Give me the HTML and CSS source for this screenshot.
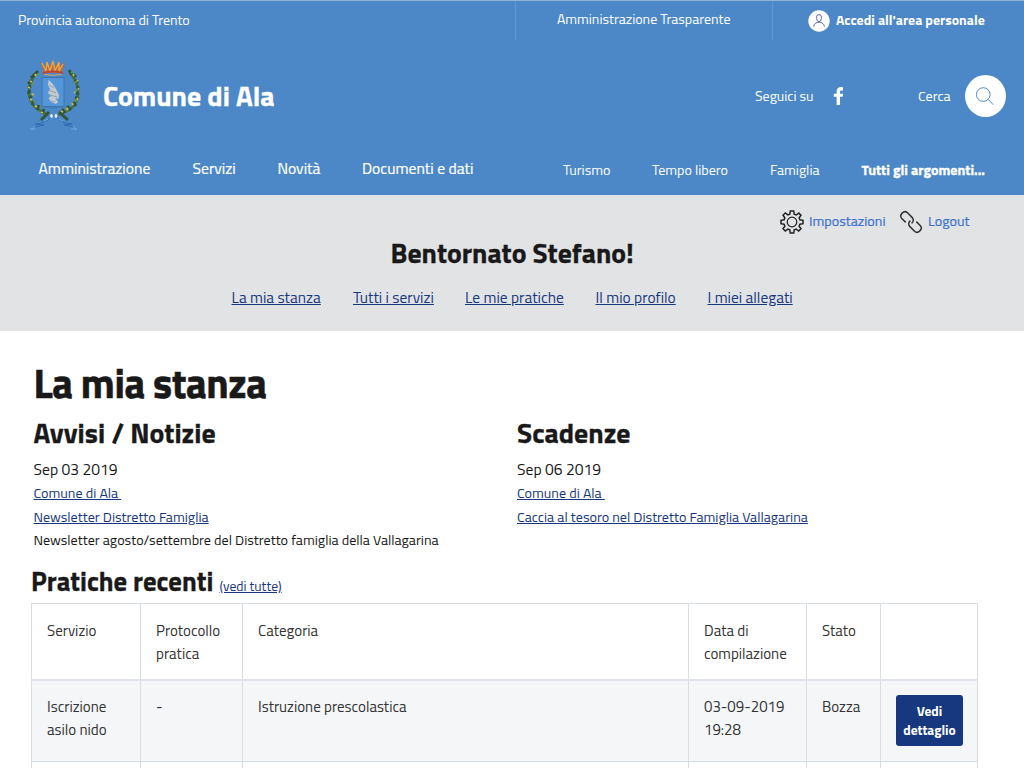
FILE: index.html
```html
<!DOCTYPE html>
<html lang="it">
<head>
<meta charset="utf-8">
<title>Comune di Ala</title>
<link rel="stylesheet" href="styles.css">
</head>
<body>
<header class="header">
  <div class="topbar">
    <a class="region"><span>Provincia autonoma di Trento</span></a>
    <a class="transparency"><span>Amministrazione Trasparente</span></a>
    <a class="login">
      <svg class="avatar" viewBox="0 0 22 22"><circle cx="11" cy="11" r="10.7" fill="#fff"/><path d="M8.700 6.500Q8.700 4.700 11 4.700T13.300 6.500V8.500Q13.100 11.700 11 11.700T8.700 8.500ZM5.600 16.600C5.900 13.500 8.500 12.200 11 12.200S16.100 13.500 16.400 16.600" fill="none" stroke="#4a5698" stroke-width=".9"/></svg>
      <span>Accedi all'area personale</span>
    </a>
  </div>
  <div class="brand-row">
    <svg class="crest" viewBox="0 0 54 72">
      <path d="M10 13C-1 24-1 42 12 50L21 55M43 13C54 25 54 42 42 50L31 55" fill="none" stroke="#467143" stroke-width="2.600"/>
      <path d="M11 11l-4 4M7 15l-3 3M5 20l-4 4M4 26l-3 2M3 30l-2 4M5 36l-3 2M7 41l-2 4M12 45l-2 5M17 49l-2 5M22 52l-8 8M42 10l3 5M46 14l3 3M48 20l3 3M50 26l2 3M50 32l1 3M48 37l4 2M46 42l3 4M40 46l4 4M35 49l3 4M32 52l9 8" stroke="#33563a" stroke-width="3" fill="none"/>
      <path d="M12 13l-3 3M7 22l-2 3M3 34l4 1M8 43l-2-3M15 48l-2-2M44 13l2-2M47 23l4-2M48 31l4-2M47 41l4-1M39 51l1-4" stroke="#66935a" stroke-width="1.500"/>
      <path d="M8 14l1 2M3 21l2 1M1 27l2 1M5 34l2 1M3 39l2 1M8 46l2 1M14 52l2 1M46 14l1 2M50 20l1 1M51 28l1 1M47 32l1 1M50 38l1 2M45 43l1 2M40 48l1 2M34 51l2 1" stroke="#c7bd59" stroke-width="1.700"/>
      <rect x="15" y="17.500" width="22" height="29" fill="#5496da" stroke="#3d74ad"/>
      <path d="M16 47Q25 47 26 49Q27 47 36 47" fill="none" stroke="#4279b8"/>
      <path d="M21.500 20L25 23L29 29L32 35L31.500 39L28.500 38L31 42L29 44L24 42L21.500 38L24 36L21 33L23 29L21 25Z" fill="#c5c9ce"/>
      <path d="M22 25l5 3M22 30l7 3M23 35l7 2M24 41l4 1" stroke="#8794a1" stroke-width=".8"/>
      <path d="M17 13L13.500 2L19 6L19.500 1L23 6L26 0L28 6L33 1L33 6L38 2L35 13Z" fill="#bd6b3d"/>
      <path d="M15 3L19 11L20 2L23 11L26 1L28 11L32 2L32 11L36 4" fill="none" stroke="#e0aa50" stroke-width="1.300"/>
      <path d="M16 13Q26 10 36 13" fill="none" stroke="#bd4338" stroke-width="2.200"/><path d="M17 14.500Q26 16 35 14.500" fill="none" stroke="#d6a95a"/>
      <path d="M25 56Q18 64 8 64L17 65L7 67M29 56Q35 64 45 64L37 65L47 67" fill="none" stroke="#2d69b2" stroke-width=".9"/>
      <path d="M21 59L17 61M32 59L36 61M8 66l-3 4M46 66l3 4M3 69h6M44 69h6" stroke="#6ab0df" stroke-width=".9"/>
      <ellipse cx="24.500" cy="56" rx="1.400" ry="2" fill="#dfe9f7"/><ellipse cx="29" cy="56" rx="1.400" ry="2" fill="#dfe9f7"/>
    </svg>
    <div class="brand"><span>Comune di Ala</span></div>
    <span class="follow">Seguici su</span>
    <svg class="facebook" viewBox="0 0 10 18"><path d="M9.500.2V3.500H7.800C6.600 3.500 6.500 4.200 6.500 5V6.700H9.500L9.100 9.700H6.500V18H3.100V9.700H.3V6.700H3.100V4.600C3.100 1.600 4.900.1 7.500.1Z" fill="#fff"/></svg>
    <span class="search-label">Cerca</span>
    <button class="search"><svg viewBox="0 0 42 42"><circle cx="18.700" cy="19" r="7" /><path d="M23.800 24L28.800 29.300"/></svg></button>
  </div>
  <nav class="nav">
    <a class="n1"><span>Amministrazione</span></a><a class="n2"><span>Servizi</span></a><a class="n3"><span>Novità</span></a><a class="n4"><span>Documenti e dati</span></a>
    <a class="n5"><span>Turismo</span></a><a class="n6"><span>Tempo libero</span></a><a class="n7"><span>Famiglia</span></a><a class="n8"><span>Tutti gli argomenti...</span></a>
  </nav>
</header>
<section class="welcome">
  <div class="tools">
    <svg class="gear" viewBox="0 0 24 24"><path d="M10.300 1H13.700L14.200 4.200L16.200 5L18.800 3.100L21 5.300L19.100 7.900L19.900 9.800L23 10.300V13.700L19.900 14.200L19.100 16.100L21 18.700L18.700 21L16.100 19.100L14.200 19.900L13.700 23H10.300L9.800 19.900L7.900 19.100L5.300 21L3 18.700L4.900 16.100L4.100 14.200L1 13.700V10.300L4.100 9.800L4.900 7.900L3 5.300L5.300 3L7.900 4.900L9.800 4.100Z" stroke-width="1.500"/><circle cx="12" cy="12" r="4.800" stroke-width="1.200"/></svg>
    <a class="settings">Impostazioni</a>
    <svg class="chain" viewBox="0 0 22 22"><g transform="rotate(45 11 11)"><path d="M7.500 15H2C-2.700 15-2.700 7 2 7H8.500C11.200 7 12.700 9 12.300 11.500M14.500 7H20C24.700 7 24.700 15 20 15H13.500C10.800 15 9.300 13 9.700 10.500"/></g></svg>
    <a class="logout">Logout</a>
  </div>
  <h2 class="greeting"><span>Bentornato Stefano!</span></h2>
  <div class="tabs"><a class="t1">La mia stanza</a><a class="t2">Tutti i servizi</a><a class="t3">Le mie pratiche</a><a class="t4">Il mio profilo</a><a class="t5">I miei allegati</a></div>
</section>
<main class="main">
  <h1 class="title"><span>La mia stanza</span></h1>
  <div class="columns">
    <section class="news">
      <h2><span class="h-news">Avvisi / Notizie</span></h2>
      <p class="date">Sep 03 2019</p>
      <p class="entry"><a>Comune di Ala&nbsp;</a></p>
      <p class="entry"><a>Newsletter Distretto Famiglia</a></p>
      <p class="summary"><span>Newsletter agosto/settembre del Distretto famiglia della Vallagarina</span></p>
    </section>
    <section class="news">
      <h2><span class="h-due">Scadenze</span></h2>
      <p class="date">Sep 06 2019</p>
      <p class="entry"><a>Comune di Ala&nbsp;</a></p>
      <p class="entry"><a>Caccia al tesoro nel Distretto Famiglia Vallagarina</a></p>
    </section>
  </div>
  <div class="recent"><h2><span class="h-recent">Pratiche recenti</span></h2><a class="all">(vedi tutte)</a></div>
  <table class="table">
    <colgroup><col class="c1"><col class="c2"><col class="c3"><col class="c4"><col class="c5"><col class="c6"></colgroup>
    <thead><tr><th>Servizio</th><th>Protocollo<br>pratica</th><th>Categoria</th><th>Data di<br>compilazione</th><th>Stato</th><th></th></tr></thead>
    <tbody>
      <tr class="odd"><td>Iscrizione<br>asilo nido</td><td>-</td><td>Istruzione prescolastica</td><td class="when">03-09-2019<br>19:28</td><td>Bozza</td><td><a class="button">Vedi<br>dettaglio</a></td></tr>
      <tr class="next"><td></td><td></td><td></td><td></td><td></td><td></td></tr>
    </tbody>
  </table>
</main>
</body>
</html>
```
FILE: styles.css
```css
* { box-sizing: border-box; }
html, body { height: 768px; overflow: hidden; }
body { margin: 0; background: #fff; color: #19191a; font-family: "Titillium Web", Roboto, sans-serif; font-size: 14.150px; line-height: 20px; }
h1, h2, p { margin: 0; }
a, span, th, td { white-space: nowrap; }
svg { display: block; flex: none; }
.header { height: 195px; background: #4c88c7; color: #fff; border-top: 1px solid #8fb3d8; }
.topbar { display: flex; height: 39px; font-size: 14.030px; line-height: 37px; }
.region { width: 515px; padding-left: 18px; }
.transparency { width: 258px; padding-left: 41px; border-left: 1px solid #6299d1; border-right: 1px solid #6299d1; line-height: 35px; }
.login { display: flex; align-items: center; padding-left: 35px; font-size: 13.900px; font-weight: 700; }
.login span { padding-bottom: 2px; }
.avatar { width: 22px; height: 22px; margin-right: 6px; }
.brand-row { display: flex; align-items: center; height: 112px; padding-left: 27px; }
.crest { width: 54px; height: 72px; margin-right: 22px; }
.brand { width: 652px; font-size: 27.900px; line-height: 34px; font-weight: 700; -webkit-text-stroke: .3px #fff; }
.follow { width: 78px; font-size: 14px; }
.facebook { width: 11px; height: 18px; margin-right: 74px; }
.search-label { width: 47px; }
.search { width: 41px; height: 42px; padding: 0; border: 0; border-radius: 50%; background: #fff; }
.search svg { fill: none; stroke: #4c88c7; stroke-width: 1; }
.nav { display: flex; height: 34px; line-height: 33px; font-size: 15.650px; padding-left: 38.500px; }
.n1 { width: 154px; } .n2 { width: 85px; } .n3 { width: 84.500px; } .n4 { width: 201px; }
.nav a:nth-child(-n+4) { -webkit-text-stroke: .2px #fff; }
.n5, .n6, .n7, .n8 { font-size: 14.100px; line-height: 35px; }
.n5 { width: 89px; } .n6 { width: 118px; } .n7 { width: 91.500px; } .n8 { font-weight: 700; -webkit-text-stroke: .3px #fff; }
.welcome { height: 136px; background: #e2e3e5; padding-top: 14px; }
.tools { display: flex; align-items: center; height: 25px; padding-left: 780px; color: #3a71d0; line-height: 24px; }
.settings, .logout { padding-bottom: 2px; -webkit-text-stroke: .2px #3a71d0; }
.gear { width: 24px; height: 24px; margin-right: 5px; fill: none; stroke: #222; }
.settings { width: 91px; }
.chain { width: 22px; height: 22px; margin-right: 6px; overflow: visible; fill: none; stroke: #333; stroke-width: 1.500; }
.greeting { padding-left: 390.500px; font-size: 27.750px; line-height: 39px; font-weight: 700; -webkit-text-stroke: .3px #19191a; }
.tabs { display: flex; padding: 14px 0 0 231.500px; color: #17387f; font-size: 15.450px; }
.tabs a { text-decoration: underline; text-underline-offset: 1px; }
.t1 { width: 121.500px; } .t2 { width: 112px; } .t3 { width: 130.500px; } .t4 { width: 112px; }
.main { padding: 27px 46px 0 31px; }
.title { padding-left: 2.500px; font-size: 40.500px; line-height: 50px; font-weight: 700; letter-spacing: -.45px; -webkit-text-stroke: .6px #19191a; }
.columns { display: flex; height: 158px; padding: 1px 0 0 2.500px; }
.news { width: 483.500px; flex: none; }
h2 { font-size: 27.850px; line-height: 40px; font-weight: 700; -webkit-text-stroke: .3px #19191a; }
.news h2 { margin-top: 4px; }
.date { font-size: 15.650px; line-height: 24px; margin-top: 4px; }
.entry { line-height: 24px; color: #17387f; }
.entry a, .all { text-decoration: underline; text-underline-offset: 1px; }
.summary { line-height: 22px; }
.recent { display: flex; align-items: baseline; height: 37px; }
.recent h2 { width: 188.500px; font-size: 26.700px; line-height: 31px; }
.all { color: #17387f; font-size: 13.650px; }
.table { width: 947px; table-layout: fixed; border-collapse: collapse; }
.c1 { width: 109px; } .c2 { width: 102px; } .c3 { width: 446px; } .c4 { width: 118px; } .c5 { width: 74px; } .c6 { width: 97px; }
th, td { height: 82px; padding: 15px 0 0 15px; border: 1px solid #d8dce3; text-align: left; vertical-align: top; font-size: 15px; line-height: 23px; font-weight: 400; color: #333; }
th { height: 76px; border-bottom: 2px solid #dfe2ea; }
td { padding-top: 14px; }
.next td { height: 7px; padding: 0; border-bottom: 0; line-height: 5px; }
.odd { background: #f5f6f8; }
.button { display: block; width: 67px; height: 51px; padding-top: 7px; border-radius: 3px; background: #17387f; color: #fff; text-align: center; font-size: 13.500px; line-height: 19px; font-weight: 700; }
```
